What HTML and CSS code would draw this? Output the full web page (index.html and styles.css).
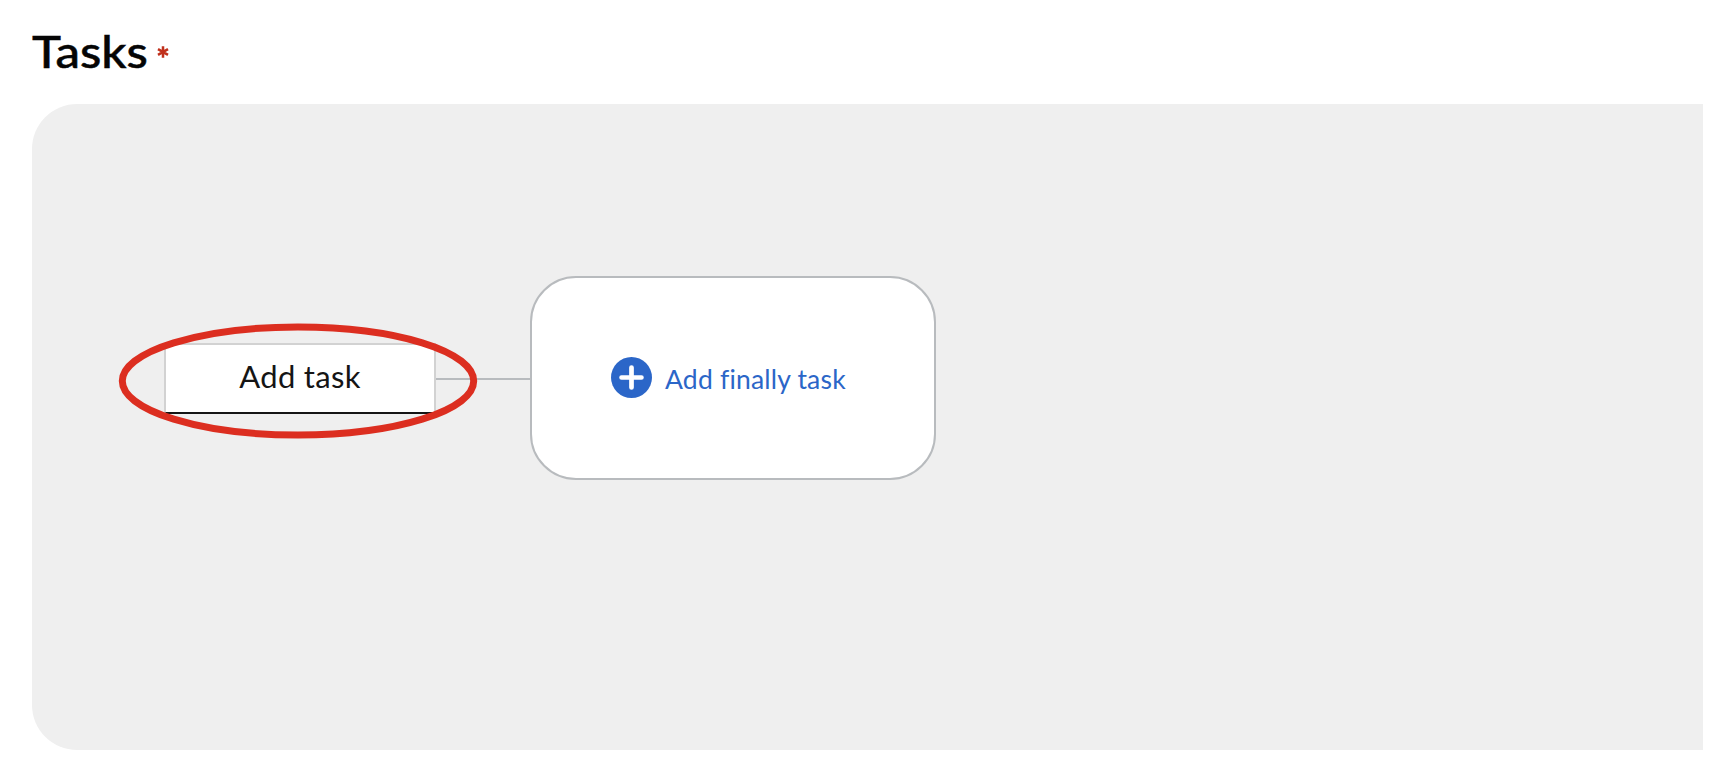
FILE: index.html
```html
<!DOCTYPE html>
<html lang="en">
<head>
<meta charset="utf-8">
<title>Tasks</title>
<link rel="stylesheet" href="styles.css">
</head>
<body>
<main class="page">
  <h1 class="heading"><span class="heading-text">Tasks</span><svg class="required" viewBox="0 0 12 12" aria-label="required"><path d="M6 .3v11.4M1 3.1l10 5.8M11 3.1L1 8.9"/></svg></h1>
  <section class="canvas">
    <span class="edge"></span>
    <button class="task-node"><span class="task-label">Add task</span></button>
    <button class="finally-node">
      <svg class="plus" viewBox="0 0 40 40"><circle cx="20" cy="20" r="20"/><path d="M20 10.3v19.4M10.3 20h19.4"/></svg>
      <span class="finally-label">Add finally task</span>
    </button>
    <svg class="highlight" viewBox="0 0 360 116"><ellipse cx="180" cy="58" rx="175.7" ry="54"/></svg>
  </section>
</main>
</body>
</html>
```
FILE: styles.css
```css
* { box-sizing: border-box; }
body {
  margin: 0;
  background: #fff;
  font-family: Lato, "Open Sans", sans-serif;
}
.page {
  height: 774px;
  padding: 24px 13px 24px 32px;
  display: flex;
  flex-direction: column;
}
.heading {
  margin: 0;
  height: 79.5px;
  display: flex;
  align-items: flex-start;
  color: #050505;
  font-size: 45px;
  font-weight: 500;
  line-height: 54px;
}
.heading-text {
  width: 115px;
  transform: scaleX(1.09);
  transform-origin: left;
  -webkit-text-stroke: 0.5px #050505;
}
.required {
  width: 12px;
  height: 12px;
  margin: 22px 0 0 10px;
  fill: none;
  stroke: #c0301c;
  stroke-width: 2.5;
}
.canvas {
  position: relative;
  flex: 1;
  background: #efefef;
  border-radius: 45px 0 0 45px;
}
button {
  padding: 0;
  font-family: inherit;
  font-variant-ligatures: none;
  white-space: nowrap;
}
.edge {
  position: absolute;
  left: 404px;
  top: 274.5px;
  width: 95px;
  height: 2px;
  background: #b8bbbe;
}
.task-node {
  position: absolute;
  left: 132px;
  top: 239.5px;
  width: 272px;
  height: 71px;
  padding-bottom: 6px;
  background: #fff;
  border: 2px solid #d2d2d2;
  border-bottom: 2px solid #151515;
  color: #151515;
  font-size: 31px;
  letter-spacing: 0.3px;
  line-height: 40px;
}
.finally-node {
  position: absolute;
  left: 498px;
  top: 172.5px;
  width: 406px;
  height: 204px;
  padding-left: 79px;
  display: flex;
  align-items: center;
  gap: 13px;
  background: #fff;
  border: 2px solid #b8bbbe;
  border-radius: 46px;
  color: #2b66c8;
  font-size: 26.5px;
}
.finally-label {
  padding-top: 2px;
  letter-spacing: 0.2px;
}
.plus {
  width: 41px;
  height: 41px;
  margin-bottom: 1px;
  fill: #2b66c8;
}
.plus path {
  stroke: #fff;
  stroke-width: 4.6;
  stroke-linecap: round;
}
.highlight {
  position: absolute;
  left: 86.3px;
  top: 219.5px;
  width: 360px;
  height: 116px;
  fill: none;
  stroke: #dc2e20;
  stroke-width: 7;
  pointer-events: none;
}
```
